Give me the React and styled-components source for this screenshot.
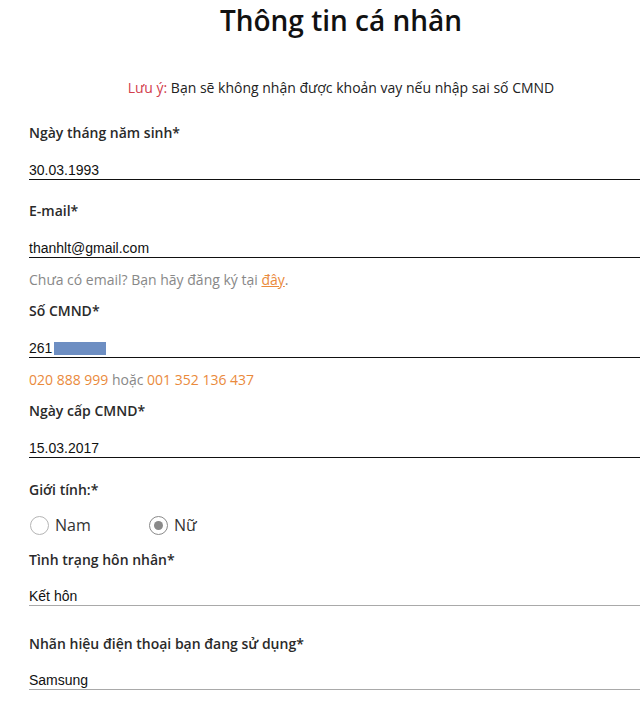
import React from 'react';
import styled, { createGlobalStyle } from 'styled-components';

const GlobalStyle = createGlobalStyle`
	html, body {
		margin: 0;
		padding: 0;
		background: #fff;
		overflow: hidden;
	}
	body {
		font-family: 'Open Sans', 'Noto Sans', sans-serif;
		color: #111;
	}
`;

const Page = styled.div`
	width: 624px;
	padding-left: 29px;
`;

const Title = styled.h1`
	margin: 0;
	font-size: 28px;
	font-weight: 600;
	line-height: 40px;
	text-align: center;
	color: #111;
`;

const Note = styled.p`
	margin: 38px 0 0;
	font-size: 14px;
	line-height: 20px;
	text-align: center;
	color: #222;
`;

const Warn = styled.span`
	color: #d2404d;
`;

const Label = styled.div`
	margin-top: ${(p) => p.$top}px;
	font-size: 14px;
	font-weight: 600;
	line-height: 20px;
	color: #2a2a2a;
`;

const Input = styled.div`
	margin-top: ${(p) => p.$top || 18}px;
	font-family: 'Liberation Sans', Arial, sans-serif;
	font-size: 14px;
	line-height: 18px;
	color: #111;
	border-bottom: 1px solid ${(p) => (p.$select ? '#a9a9a9' : '#111')};
	display: flex;
	align-items: center;
	gap: 2px;
`;

const Masked = styled.span`
	display: inline-block;
	width: 52px;
	height: 13px;
	background: #6d8ec2;
`;

const Hint = styled.div`
	margin-top: 12px;
	font-size: 14px;
	line-height: 20px;
	color: #888;
`;

const Orange = styled.span`
	color: #ea8a3c;
`;

const OrangeLink = styled.a`
	color: #ea8a3c;
	text-decoration: underline;
`;

const RadioRow = styled.div`
	margin-top: 15px;
	display: flex;
	align-items: center;
	height: 20px;
`;

const RadioOption = styled.label`
	display: flex;
	align-items: center;
	gap: 6px;
	width: 119px;
	font-size: 16px;
	color: #333;
`;

const RadioDot = styled.span`
	box-sizing: border-box;
	width: 19px;
	height: 19px;
	margin-left: 1px;
	border-radius: 50%;
	border: 1.5px solid ${(p) => (p.$checked ? '#8a8a8a' : '#b5b5b5')};
	display: flex;
	align-items: center;
	justify-content: center;
	&::after {
		content: '';
		display: ${(p) => (p.$checked ? 'block' : 'none')};
		width: 9px;
		height: 9px;
		border-radius: 50%;
		background: #8a8a8a;
	}
`;

export default function App() {
	return (
		<>
			<GlobalStyle />
			<Page>
				<Title>Thông tin cá nhân</Title>
				<Note>
					<Warn>Lưu ý:</Warn> Bạn sẽ không nhận được khoản vay nếu nhập sai số CMND
				</Note>

				<Label $top={25}>Ngày tháng năm sinh*</Label>
				<Input>30.03.1993</Input>

				<Label $top={21}>E-mail*</Label>
				<Input>thanhlt@gmail.com</Input>
				<Hint>
					Chưa có email? Bạn hãy đăng ký tại <OrangeLink>đây</OrangeLink>.
				</Hint>

				<Label $top={11}>Số CMND*</Label>
				<Input>
					261 <Masked />
				</Input>
				<Hint>
					<Orange>020 888 999</Orange> hoặc <Orange>001 352 136 437</Orange>
				</Hint>

				<Label $top={11}>Ngày cấp CMND*</Label>
				<Input>15.03.2017</Input>

				<Label $top={22}>Giới tính:*</Label>
				<RadioRow>
					<RadioOption>
						<RadioDot />
						Nam
					</RadioOption>
					<RadioOption>
						<RadioDot $checked />
						Nữ
					</RadioOption>
				</RadioRow>

				<Label $top={15}>Tình trạng hôn nhân*</Label>
				<Input $select $top={17}>
					Kết hôn
				</Input>

				<Label $top={28}>Nhãn hiệu điện thoại bạn đang sử dụng*</Label>
				<Input $select $top={17}>
					Samsung
				</Input>
			</Page>
		</>
	);
}
